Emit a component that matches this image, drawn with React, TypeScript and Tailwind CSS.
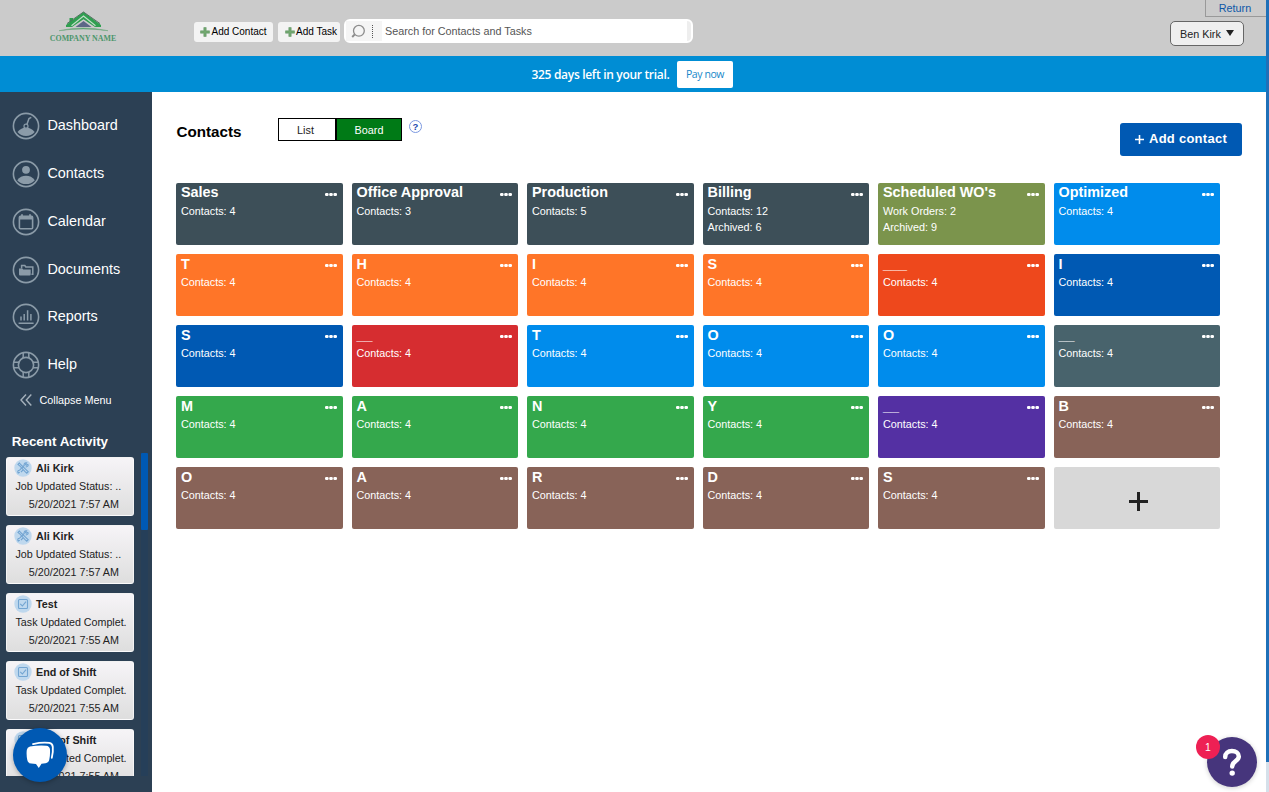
import type { ReactNode } from 'react';

type Board = { title: string; color: string; lines?: string[] };

const SLATE = 'bg-[#3d4f58]';
const ORANGE = 'bg-[#ff7528]';
const BLUE = 'bg-[#008cec]';
const NAVY = 'bg-[#0059b3]';
const GREEN = 'bg-[#34a84c]';
const BROWN = 'bg-[#886358]';

const boards: Board[] = [
  { title: 'Sales', color: SLATE },
  { title: 'Office Approval', color: SLATE, lines: ['Contacts: 3'] },
  { title: 'Production', color: SLATE, lines: ['Contacts: 5'] },
  { title: 'Billing', color: SLATE, lines: ['Contacts: 12', 'Archived: 6'] },
  { title: "Scheduled WO's", color: 'bg-[#7b944c]', lines: ['Work Orders: 2', 'Archived: 9'] },
  { title: 'Optimized', color: BLUE },
  { title: 'T', color: ORANGE },
  { title: 'H', color: ORANGE },
  { title: 'I', color: ORANGE },
  { title: 'S', color: ORANGE },
  { title: '___', color: 'bg-[#ee481c]' },
  { title: 'I', color: NAVY },
  { title: 'S', color: NAVY },
  { title: '__', color: 'bg-[#d62d30]' },
  { title: 'T', color: BLUE },
  { title: 'O', color: BLUE },
  { title: 'O', color: BLUE },
  { title: '__', color: 'bg-[#48636c]' },
  { title: 'M', color: GREEN },
  { title: 'A', color: GREEN },
  { title: 'N', color: GREEN },
  { title: 'Y', color: GREEN },
  { title: '__', color: 'bg-[#5430a3]' },
  { title: 'B', color: BROWN },
  { title: 'O', color: BROWN },
  { title: 'A', color: BROWN },
  { title: 'R', color: BROWN },
  { title: 'D', color: BROWN },
  { title: 'S', color: BROWN },
];

function BoardCard({ board, first }: { board: Board; first: boolean }) {
  return (
    <div className={`flex h-[62px] justify-between rounded-[2px] pl-[5px] pr-[6px] text-white ${board.color}`}>
      <div className="min-w-0">
        <div className={`h-5 whitespace-nowrap text-[14.4px] leading-[18px] font-bold ${first ? '' : 'pt-[1px]'}`}>
          {board.title}
        </div>
        {(board.lines ?? ['Contacts: 4']).map((line) => (
          <div key={line} className="h-4 whitespace-nowrap text-[10.8px] leading-4">
            {line}
          </div>
        ))}
      </div>
      <svg className="mt-[10px] h-[3px] w-3" viewBox="0 0 12 3" fill="currentColor">
        <rect x="0" y="0" width="3.6" height="3" rx="1.2" />
        <rect x="4.2" y="0" width="3.6" height="3" rx="1.2" />
        <rect x="8.4" y="0" width="3.6" height="3" rx="1.2" />
      </svg>
    </div>
  );
}

function NavIcon({ children }: { children?: ReactNode }) {
  return (
    <svg className="-mt-px h-7 w-7 text-[#8b9ba8]" viewBox="0 0 28 28" fill="none" stroke="currentColor" strokeWidth="1.6">
      <circle cx="14" cy="14" r="12.6" />
      {children}
    </svg>
  );
}

const nav: { label: string; icon: ReactNode }[] = [
  {
    label: 'Dashboard',
    icon: (
      <NavIcon>
        <path d="M5.5 20C8 17.4 10.8 15.6 14 15.6S20.2 17.4 22.7 20C20.5 22.6 17.5 24 14 24S7.7 22.6 5.5 20Z" fill="currentColor" stroke="none" />
        <path d="M14.8 12.8L17 6.6L19.3 5.4" strokeWidth="1.5" />
        <circle cx="14" cy="14.2" r="2" fill="#2c4054" strokeWidth="1.2" />
      </NavIcon>
    ),
  },
  {
    label: 'Contacts',
    icon: (
      <NavIcon>
        <circle cx="14" cy="9.8" r="3.9" fill="currentColor" stroke="none" />
        <path d="M5.2 20.2C7.4 17.2 10.4 15.8 14 15.8S20.6 17.2 22.8 20.2C20.4 22.9 17.6 24.1 14 24.1S7.6 22.9 5.2 20.2Z" fill="currentColor" stroke="none" />
      </NavIcon>
    ),
  },
  {
    label: 'Calendar',
    icon: (
      <NavIcon>
        <rect x="7.4" y="8.4" width="13.2" height="12.4" rx="1" />
        <path d="M7.4 9.8H20.6" strokeWidth="3.4" />
        <path d="M10 6.2V9M18 6.2V9" strokeWidth="1.8" />
      </NavIcon>
    ),
  },
  {
    label: 'Documents',
    icon: (
      <NavIcon>
        <path d="M9.6 12.6V9.6H12.8L13.8 11H20.8V18.2H19.5" strokeWidth="1.5" />
        <path d="M7 12.4H10.2L11.3 13.6H18.7V18.4A1 1 0 0 1 17.7 19.4H8A1 1 0 0 1 7 18.4Z" fill="currentColor" stroke="none" />
      </NavIcon>
    ),
  },
  {
    label: 'Reports',
    icon: (
      <NavIcon>
        <path d="M9 13.6V17.6M12.2 11V17.6M15.6 7.3V17.6M18.9 11V17.6M6.6 20.2H21.6" strokeWidth="1.5" />
      </NavIcon>
    ),
  },
  {
    label: 'Help',
    icon: (
      <NavIcon>
        <circle cx="14" cy="14" r="7.6" />
        <path d="M11.2 1.7V7M16.8 1.7V7M11.2 21V26.3M16.8 21V26.3M1.7 11.2H7M1.7 16.8H7M21 11.2H26.3M21 16.8H26.3" strokeWidth="1.5" />
      </NavIcon>
    ),
  },
];

const activities = [
  { name: 'Ali Kirk', kind: 'job', text: 'Job Updated Status: ..', time: '5/20/2021 7:57 AM' },
  { name: 'Ali Kirk', kind: 'job', text: 'Job Updated Status: ..', time: '5/20/2021 7:57 AM' },
  { name: 'Test', kind: 'task', text: 'Task Updated Complet.', time: '5/20/2021 7:55 AM' },
  { name: 'End of Shift', kind: 'task', text: 'Task Updated Complet.', time: '5/20/2021 7:55 AM' },
  { name: 'End of Shift', kind: 'task', text: 'Task Updated Complet.', time: '5/20/2021 7:55 AM' },
];

function ActivityIcon({ kind }: { kind: string }) {
  return (
    <svg className="h-[18px] w-[18px]" viewBox="0 0 18 18" fill="none" stroke="#73a5d2" strokeWidth="1.1">
      <circle cx="9" cy="9" r="8.7" fill="#bfd8ee" stroke="none" />
      {kind === 'job' ? (
        <>
          <path d="M5.4 4L4 5.4L6 7.2L10.8 12.3L12.8 14.2L14.2 12.8L12 10.7L7.2 6Z" />
          <path d="M13.9 5.2L12.2 6.2L11.5 5.5L12.6 3.9C10.8 3.5 9.7 4.8 10.2 6.5L5.6 11.2C4 11 3.2 12.7 4.2 14.1L5.8 13.2M11.6 7.8C13.5 8.2 14.7 6.8 13.9 5.2M9 11L6.9 13.2" />
        </>
      ) : (
        <>
          <rect x="4.5" y="4.5" width="9" height="9" rx="1" />
          <path d="M6.2 8.8L8.4 11L12 6.6" />
        </>
      )}
    </svg>
  );
}

function Plus() {
  return (
    <svg className="h-[10px] w-[10px] shrink-0" viewBox="0 0 10 10">
      <path d="M3.8.5H6.2V3.8H9.5V6.2H6.2V9.5H3.8V6.2H.5V3.8H3.8Z" fill="#72a870" stroke="#5c9160" strokeWidth=".5" />
    </svg>
  );
}

function Logo() {
  return (
    <div className="flex w-[68px] flex-col items-center">
      <svg className="h-[22px] w-[56px]" viewBox="0 0 56 22">
        <path d="M11 14L28.5 1L46 14V16H40L28.5 8.2L17 16H11Z" fill="#2f9f50" />
        <path d="M14.5 7H18V10L14.5 12.5Z" fill="#2f9f50" />
        <path d="M12 12.6L28.5 1L45 12.6" fill="none" stroke="#52715f" strokeWidth="1" />
        <path d="M16.5 14.8L28.5 5L40.5 14.8" fill="none" stroke="#c3dcc8" strokeWidth="1.1" />
        <path d="M20.5 16L28.5 10L36.5 16Z" fill="#5d6787" />
        <path d="M4 19.7Q28 14.2 53 19.7Q28 16.2 4 19.7Z" fill="#54a36a" stroke="#6da67c" strokeWidth=".5" />
      </svg>
      <div className="mt-[1px] whitespace-nowrap font-['Liberation_Serif',serif] text-[7.9px] leading-[9px] font-bold text-[#4c966b]">
        COMPANY NAME
      </div>
    </div>
  );
}

export default function App() {
  return (
    <div className="relative flex h-[792px] w-[1269px] overflow-hidden bg-white font-['Liberation_Sans',Arial,sans-serif] text-[#222]">
      <div className="flex w-[1266px] flex-col">
        <header className="flex h-14 bg-[#cbcbcb]">
          <div className="w-[194px] pt-[11px] pl-[49px]">
            <Logo />
          </div>
          <button className="mt-[22px] flex h-5 w-[79px] items-center gap-[2px] rounded-[3px] bg-[#f3f3f3] pb-[1px] pl-[5.5px] text-[10px] whitespace-nowrap text-black">
            <Plus />
            Add Contact
          </button>
          <button className="mt-[22px] ml-[5px] flex h-5 w-[62px] items-center gap-[1.5px] rounded-[3px] bg-[#f3f3f3] pb-[1px] pl-[6.5px] text-[10px] whitespace-nowrap text-black">
            <Plus />
            Add Task
          </button>
          <div className="mt-[19px] ml-1 flex h-6 w-[349px] items-center rounded-md border-2 border-white bg-white">
            <div className="flex h-full w-9 items-center bg-[#f5f5f5] pl-[4px]">
              <svg className="h-4 w-4" viewBox="0 0 16 16" fill="none" stroke="#8c8c8c">
                <circle cx="8.9" cy="7.8" r="5.4" strokeWidth="1.3" />
                <path d="M4.8 11.4L2.2 14" strokeWidth="2" />
              </svg>
              <div className="ml-[6px] h-[13px] border-l border-dotted border-[#555]" />
            </div>
            <span className="ml-[3px] text-[10.8px] text-[#555]">Search for Contacts and Tasks</span>
            <div className="ml-auto h-full w-1 rounded-r bg-[#eeeeee]" />
          </div>
          <div className="ml-auto flex flex-col items-end">
            <a className="flex h-[17px] w-[61px] items-center justify-center border-b border-l border-[#999] pr-[2px] text-[10.8px] text-[#0b57a8]">
              Return
            </a>
            <button className="mt-1 mr-[22px] flex h-[25px] w-[74px] items-center rounded-[5px] border border-[#666] bg-[#efefef] pt-[1px] pl-[9px] text-[10.8px] whitespace-nowrap text-[#222]">
              Ben Kirk
              <svg className="mb-[3px] ml-[5px] h-[6px] w-2" viewBox="0 0 8 6">
                <path d="M0 0H8L4 6Z" fill="#222" />
              </svg>
            </button>
          </div>
        </header>

        <div className="flex h-9 items-center bg-[#008dd4] pl-[531.5px]">
          <span className="w-[145.5px] pt-[1.5px] font-['Open_Sans','Noto_Sans',sans-serif] text-[12px] leading-none font-semibold tracking-[-0.31px] whitespace-nowrap text-white">
            325 days left in your trial.
          </span>
          <button className="h-[27px] w-14 rounded-[2px] bg-white pt-[2px] font-['Open_Sans','Noto_Sans',sans-serif] text-[10.5px] tracking-[-0.4px] text-[#1787c9]">
            Pay now
          </button>
        </div>

        <div className="flex h-[700px]">
          <aside className="flex w-[152px] flex-col bg-[#2c4054] text-white">
            <nav className="flex flex-col gap-5 pt-5 pl-[12.4px]">
              {nav.map((item) => (
                <a
                  key={item.label}
                  className={`flex h-7 items-center gap-[7px] text-[14.4px] ${item.label === 'Reports' ? '-mt-px' : ''}`}
                >
                  {item.icon}
                  {item.label}
                </a>
              ))}
            </nav>
            <div className="mt-[11px] flex h-5 items-center pl-[19.5px] text-[10.8px]">
              <svg className="mr-2 h-3 w-3" viewBox="0 0 12 12" fill="none" stroke="#a5b1bc" strokeWidth="1.4">
                <path d="M6 .5L1 6L6 11.5M11.3 .5L6.3 6L11.3 11.5" />
              </svg>
              Collapse Menu
            </div>
            <h2 className="mt-[22px] pl-[11.8px] text-[13.4px] leading-5 font-bold">Recent Activity</h2>
            <div className="mt-[1px] flex h-[323px] justify-between overflow-hidden pl-[6px]">
              <div className="flex w-32 flex-col gap-[9px] pt-1">
                {activities.map((a, i) => (
                  <div
                    key={i}
                    className="h-[59px] shrink-0 overflow-hidden rounded-[3px] border border-white/60 bg-linear-to-b from-[#f6f4f7] to-[#dedede] text-[10.75px] leading-[18px] text-[#222]"
                  >
                    <div className="flex h-[19px] items-start pt-[1px] pl-[7px] font-bold">
                      <ActivityIcon kind={a.kind} />
                      <span className="ml-[4px]">{a.name}</span>
                    </div>
                    <div className="pl-[8.5px] text-[10.7px] whitespace-nowrap">{a.text}</div>
                    <div className="pr-[14px] text-right whitespace-nowrap">{a.time}</div>
                  </div>
                ))}
              </div>
              <div className="mr-[4px] w-[7px] bg-[#263f59]">
                <div className="h-[77px] rounded-[1px] bg-[#0059b3]" />
              </div>
            </div>
          </aside>

          <main className="flex flex-1 flex-col pl-6">
            <div className="flex h-[91px] items-start">
              <h1 className="mt-[30px] w-[102px] pl-[0.5px] text-[15.2px] leading-5 font-bold text-black">Contacts</h1>
              <div className="mt-[26px] flex h-[23px] w-[124px] border border-black text-[10.8px]">
                <button className="w-[56px] pt-[1px] text-[#222]">
                  <span className="mr-[3px]">List</span>
                </button>
                <button className="flex-1 border-l-2 border-black bg-[#007a16] pt-[1px] text-white">Board</button>
              </div>
              <div className="mt-7 ml-[7px] flex h-[13px] w-[13px] items-center justify-center rounded-full border border-[#7b98e0] text-[9.5px] leading-none font-bold text-[#1a49ae]">
                ?
              </div>
              <button className="mt-[31px] mr-6 ml-auto flex h-[33px] w-[122px] items-center rounded-[3px] bg-[#0059b3] pb-[1px] pl-[15px] text-[13px] font-bold tracking-[0.26px] whitespace-nowrap text-white">
                <svg className="mr-[5px] h-[9px] w-[9px]" viewBox="0 0 9 9" stroke="white" strokeWidth="1.6">
                  <path d="M4.5 0V9M0 4.5H9" />
                </svg>
                Add contact
              </button>
            </div>
            <div className="grid w-[1044px] grid-cols-6 gap-[9px]">
              {boards.map((b, i) => (
                <BoardCard key={i} board={b} first={i < 6} />
              ))}
              <button className="flex h-[62px] items-center justify-center rounded-[2px] bg-[#d8d8d8]">
                <svg className="mt-[7px] ml-[3px] h-[19px] w-[19px]" viewBox="0 0 19 19" stroke="#222" strokeWidth="3">
                  <path d="M9.5 0V19M0 9.5H19" />
                </svg>
              </button>
            </div>
          </main>
        </div>
      </div>

      <div className="w-[3px] bg-[#d5e0ea]">
        <div className="h-[762px] bg-[#1f70b8]" />
      </div>

      <button className="absolute top-[728px] left-[13px] flex h-[54px] w-[54px] items-center justify-center rounded-full bg-[#0059b3] shadow-[0_1px_5px_rgba(0,0,0,0.3)]">
        <svg className="h-[28px] w-[30px]" viewBox="0 0 30 28">
          <path d="M8 3.1Q17 1 24.3 1.9Q27.4 2.4 27.8 5.8Q28.3 10.5 26.8 16.8" fill="none" stroke="white" strokeWidth="1.8" strokeLinecap="round" />
          <path d="M5 5.6Q13 4 21.2 4.7Q24.7 5 25 8.6Q25.3 14 24.3 18.6Q23.7 21.9 20.5 22.3L16.5 22.7L13.8 27L11 22.9L6.3 22.6Q3 22.4 2.3 19Q1.2 14 1.8 9Q2.2 6.2 5 5.6Z" fill="white" />
        </svg>
      </button>

      <button className="absolute top-[737px] left-[1207px] flex h-[50px] w-[50px] items-center justify-center rounded-full bg-[#46357c] shadow-[0_1px_5px_rgba(0,0,0,0.2)]">
        <svg className="h-[28px] w-5" viewBox="0 0 20 28" fill="none">
          <path d="M3.2 9C3.2 5.2 6 3.1 9.9 3.1S16.8 5.2 16.8 8.6C16.8 13 10.2 13.2 10.2 18.4" stroke="white" strokeWidth="4.5" strokeLinecap="round" />
          <circle cx="10.2" cy="25.1" r="2.7" fill="white" />
        </svg>
      </button>
      <div className="absolute top-[735px] left-[1196px] flex h-6 w-6 items-center justify-center rounded-full bg-[#ee2054] text-[10.5px] leading-none text-white">
        1
      </div>
    </div>
  );
}
